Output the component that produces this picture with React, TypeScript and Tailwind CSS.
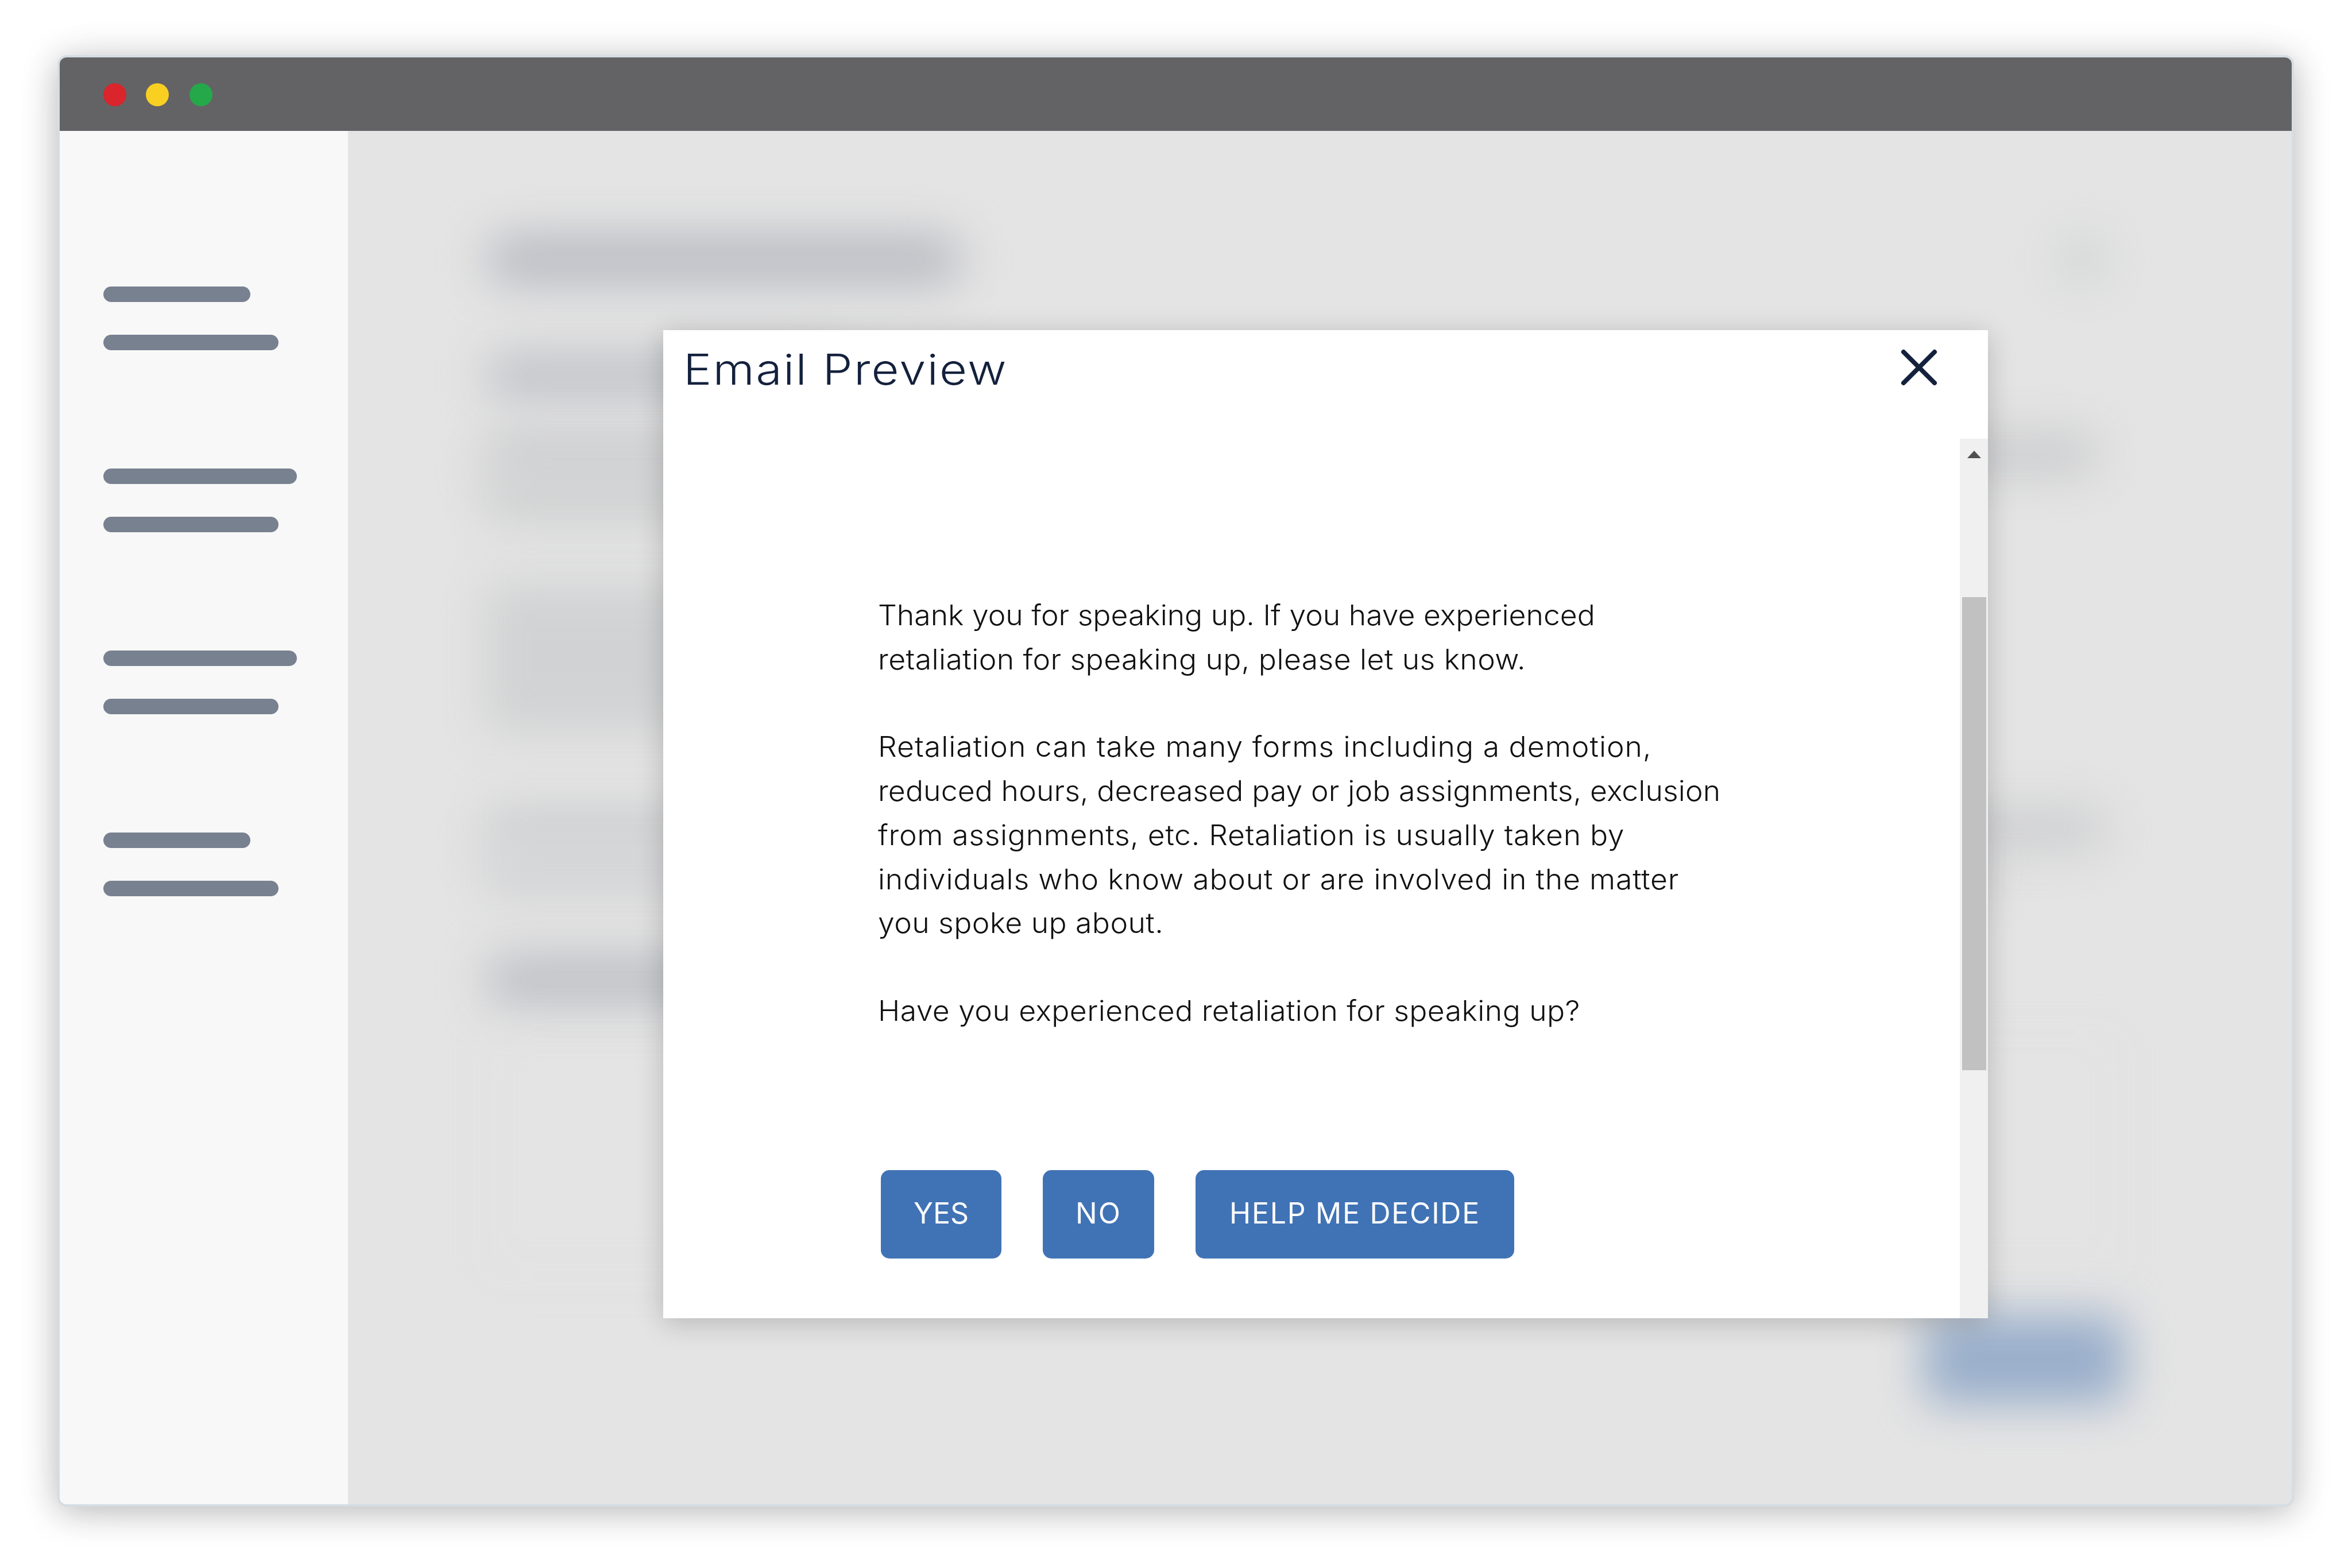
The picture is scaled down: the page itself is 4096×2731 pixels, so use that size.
import { X } from "lucide-react";

const navGroups = [
    ["w-[256px]", "w-[305px]"],
    ["w-[337px]", "w-[305px]"],
    ["w-[337px]", "w-[305px]"],
    ["w-[256px]", "w-[305px]"],
]

function TitleBar() {
    return (
        <div className="flex h-[128px] shrink-0 items-center bg-[#636365] pl-[76px] pt-0.5">
            <div className="size-10 rounded-full bg-[#d9252b]" />
            <div className="ml-[34px] size-10 rounded-full bg-[#f9cf22]" />
            <div className="ml-[36px] size-10 rounded-full bg-[#25a84a]" />
        </div>
    )
}

function Sidebar() {
    return (
        <div className="flex w-[502px] shrink-0 flex-col gap-[206px] bg-[#f8f8f8] pl-[76px] pt-[271px]">
            {navGroups.map((group, i) => (
                <div key={i} className="flex flex-col gap-[57px]">
                    {group.map((width, j) => (
                        <div key={j} className={`h-[27px] rounded-full bg-[#788190] ${width}`} />
                    ))}
                </div>
            ))}
        </div>
    )
}

// The page behind the dialog, out of focus
function BlurredPage() {
    return (
        <div className="flex h-full flex-col pl-[240px] pr-[290px] pt-[182px]">
            <div className="flex items-center justify-between">
                <div className="h-[84px] w-[830px] rounded-[42px] bg-[#b8bac1] blur-[40px]" />
                <div className="mr-[33px] size-[84px] rounded-full bg-[#d0d3d3] blur-[40px]" />
            </div>
            <div className="mt-[122px] h-[76px] w-[620px] rounded-[36px] bg-[#bfc1c6] blur-[40px]" />
            <div className="mt-[64px] h-[70px] w-[2806px] rounded-[24px] bg-[#cacbcd] blur-[40px]" />
            <div className="h-[80px] w-[1200px] bg-[#cecfd0] blur-[40px]" />
            <div className="mt-[110px] h-[260px] w-[1200px] bg-[#d1d2d3] blur-[40px]" />
            <div className="mt-[130px] h-[76px] w-[2818px] bg-[#cecfd1] blur-[40px]" />
            <div className="h-[80px] w-[2620px] bg-[#d2d3d5] blur-[40px]" />
            <div className="mt-[104px] h-[80px] w-[620px] rounded-[36px] bg-[#bbbdc3] blur-[40px]" />
            <div className="mt-[50px] h-[430px] w-[2850px] rounded-2xl border-4 border-[#dcdddd] blur-[34px]" />
            <div className="mt-[65px] h-[154px] w-[350px] self-end rounded-[24px] bg-[#99aeca] blur-[40px]" />
        </div>
    )
}

function EmailButton({ label, className }: { label: string; className: string }) {
    return (
        <button className={`flex h-[154px] items-center justify-center whitespace-nowrap rounded-[15px] bg-[#4073b5] pb-[3px] text-[50px] text-white ${className}`}>
            {label}
        </button>
    )
}

function EmailPreview() {
    return (
        <div className="absolute left-[549px] top-[347px] flex h-[1721px] w-[2307px] flex-col bg-white shadow-[0_8px_46px_rgba(0,0,0,0.2)]">
            <div className="flex h-[189px] shrink-0 items-start justify-between pl-[35px] pr-[66px]">
                <h1 className="mt-[12px] origin-left scale-x-[1.12] whitespace-nowrap text-[74px] leading-[112px] font-[350] tracking-[2px] text-[#14213d]">Email Preview</h1>
                <X className="mt-[11px] size-[108px] text-[#14213d]" strokeWidth={1.8} />
            </div>
            <div className="flex min-h-0 grow">
                <div className="flex grow flex-col pl-[374px] pt-[270px]">
                    <div className="origin-left scale-x-[1.055] whitespace-nowrap text-[49px] leading-[76.7px] font-[350] text-[#111]">
                        <p>Thank you for speaking up. If you have experienced</p>
                        <p className="tracking-[0.4px]">retaliation for speaking up, please let us know.</p>
                        <p className="mt-[76px] tracking-[0.95px]">Retaliation can take many forms including a demotion,</p>
                        <p className="tracking-[0.1px]">reduced hours, decreased pay or job assignments, exclusion</p>
                        <p className="tracking-[0.65px]">from assignments, etc. Retaliation is usually taken by</p>
                        <p className="tracking-[0.75px]">individuals who know about or are involved in the matter</p>
                        <p className="tracking-[0.4px]">you spoke up about.</p>
                        <p className="mt-[76px] tracking-[0.4px]">Have you experienced retaliation for speaking up?</p>
                    </div>
                    <div className="mt-[238px] flex pl-[5px]">
                        <EmailButton label="YES" className="w-[210px]" />
                        <EmailButton label="NO" className="ml-[72px] w-[194px] tracking-[2px]" />
                        <EmailButton label="HELP ME DECIDE" className="ml-[72px] w-[555px] tracking-[1.7px]" />
                    </div>
                </div>
                <div className="flex w-[49px] shrink-0 flex-col items-center bg-[#f0f0f0] pt-[21px]">
                    <svg className="h-[13px] w-[24px]" viewBox="0 0 24 13">
                        <path d="M12 0L24 13H0z" fill="#505050" />
                    </svg>
                    <div className="mt-[242px] h-[824px] w-[42px] bg-[#c1c1c1]" />
                </div>
            </div>
        </div>
    )
}

export default function App() {
    return (
        <div className="h-[2731px] w-[4096px] overflow-hidden bg-white pl-[100px] pt-[96px] font-['Inter',sans-serif]">
            <div className="flex h-[2528px] w-[3895px] flex-col overflow-hidden rounded-[16px] border-4 border-[#d5dde3] bg-[#e4e4e4] shadow-[0_9px_60px_rgba(0,0,0,0.27),0_0_110px_rgba(0,0,0,0.03)]">
                <TitleBar />
                <div className="flex min-h-0 grow">
                    <Sidebar />
                    <div className="relative grow overflow-hidden bg-[#e4e4e4]">
                        <BlurredPage />
                        <EmailPreview />
                    </div>
                </div>
            </div>
        </div>
    )
}
